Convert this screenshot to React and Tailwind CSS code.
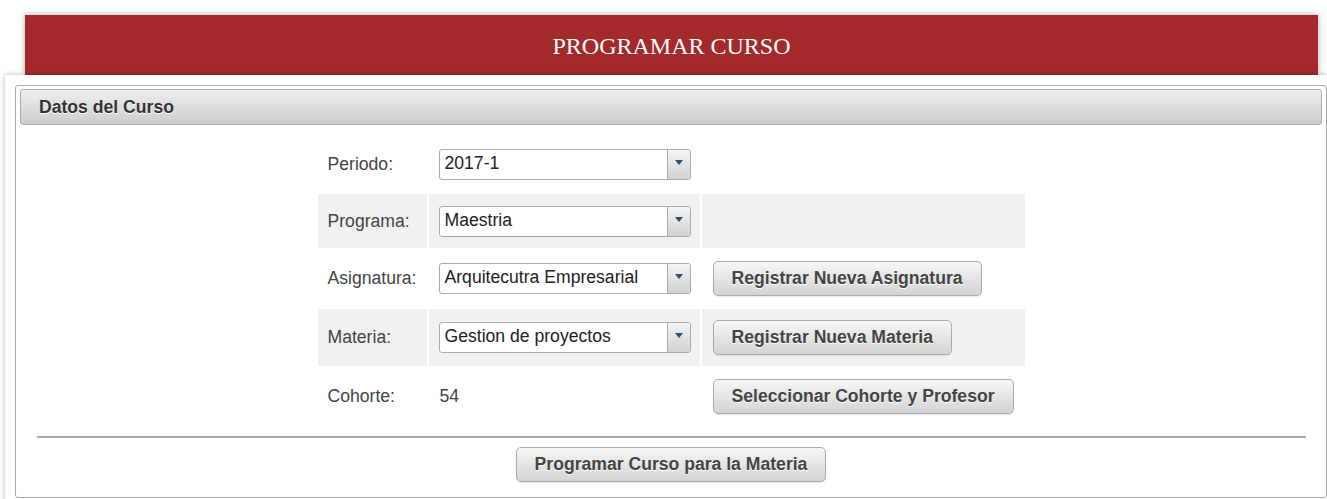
import React from 'react';

const FONT = { fontFamily: '"Liberation Sans", Arial, sans-serif' };

function Select({ value }) {
  return (
    <div className="flex h-[31px] w-[252px] rounded-[3px] border border-[#aaa] bg-white overflow-hidden">
      <div className="flex-1 pl-[5px] pt-[3px] text-[17.6px] leading-[21px] text-[#222] whitespace-nowrap">{value}</div>
      <div className="w-[23px] border-l border-[#aaa] bg-gradient-to-b from-[#f4f4f4] to-[#d2d2d2] flex justify-center pt-[10px]">
        <svg width="8" height="5" viewBox="0 0 8 5"><path d="M0 0h8L4 5z" fill="#2f4f6a" /></svg>
      </div>
    </div>
  );
}

function Btn({ children }) {
  return (
    <button className="h-[35px] px-[18px] rounded-[5px] border border-[#aaa] bg-gradient-to-b from-[#f6f6f6] to-[#d4d4d4] text-[17.6px] font-bold text-[#444] whitespace-nowrap [text-shadow:0_1px_0_#fff] shadow-[0_1px_1px_rgba(0,0,0,0.08)]">
      {children}
    </button>
  );
}

const rows = [
  { label: 'Periodo:', field: <Select value="2017-1" />, h: 'h-[56px]', gray: false },
  { label: 'Programa:', field: <Select value="Maestria" />, h: 'h-[54px]', gray: true },
  { label: 'Asignatura:', field: <Select value="Arquitecutra Empresarial" />, btn: 'Registrar Nueva Asignatura', h: 'h-[57px]', gray: false },
  { label: 'Materia:', field: <Select value="Gestion de proyectos" />, btn: 'Registrar Nueva Materia', h: 'h-[57px]', gray: true },
  { label: 'Cohorte:', field: <span className="pl-[1px] text-[17.6px] text-[#444]">54</span>, btn: 'Seleccionar Cohorte y Profesor', h: 'h-[57px]', gray: false },
];

export default function App() {
  return (
    <div className="min-h-[499px] bg-white pt-[15px] overflow-hidden" style={FONT}>
      {/* Title bar */}
      <div className="ml-[25px] w-[1293px] h-[60px] bg-[#a3292a] shadow-[0_0_6px_rgba(0,0,0,0.35)] flex items-center justify-center">
        <h1 className="text-white text-[24px] pt-[1px]" style={{ fontFamily: '"Liberation Serif", "Times New Roman", serif' }}>
          PROGRAMAR CURSO
        </h1>
      </div>

      {/* Panel */}
      <div className="relative ml-[5px] bg-white shadow-[0_0_5px_rgba(0,0,0,0.3)] pt-[10px] pl-[10px] h-[440px]">
        <div className="border border-[#aaa] rounded-[3px] h-[413px] px-[4px] pt-[3px]">
          <div className="h-[36px] border border-[#aaa] rounded-[3px] bg-gradient-to-b from-[#efefef] to-[#cdcdcd] flex items-center pl-[18px]">
            <span className="text-[17.6px] font-bold text-[#333] [text-shadow:0_1px_0_#fff]">Datos del Curso</span>
          </div>

          <table className="mx-auto mt-[9px] border-separate border-spacing-[2px]">
            <tbody>
              {rows.map((r) => (
                <tr key={r.label} className={r.h}>
                  <td className={`w-[109px] pl-[10px] text-[17.6px] text-[#444] align-middle ${r.gray ? 'bg-[#f1f1f1]' : ''}`}>{r.label}</td>
                  <td className={`w-[271px] pl-[10px] align-middle ${r.gray ? 'bg-[#f1f1f1]' : ''}`}>{r.field}</td>
                  <td className={`w-[323px] pl-[11px] align-middle ${r.gray ? 'bg-[#f1f1f1]' : ''}`}>{r.btn && <Btn>{r.btn}</Btn>}</td>
                </tr>
              ))}
            </tbody>
          </table>

          <div className="ml-[17px] mr-[16px] mt-[9px] h-[2px] bg-[#aaa]" />

          <div className="flex justify-center mt-[9px]">
            <Btn>Programar Curso para la Materia</Btn>
          </div>
        </div>
      </div>
    </div>
  );
}
